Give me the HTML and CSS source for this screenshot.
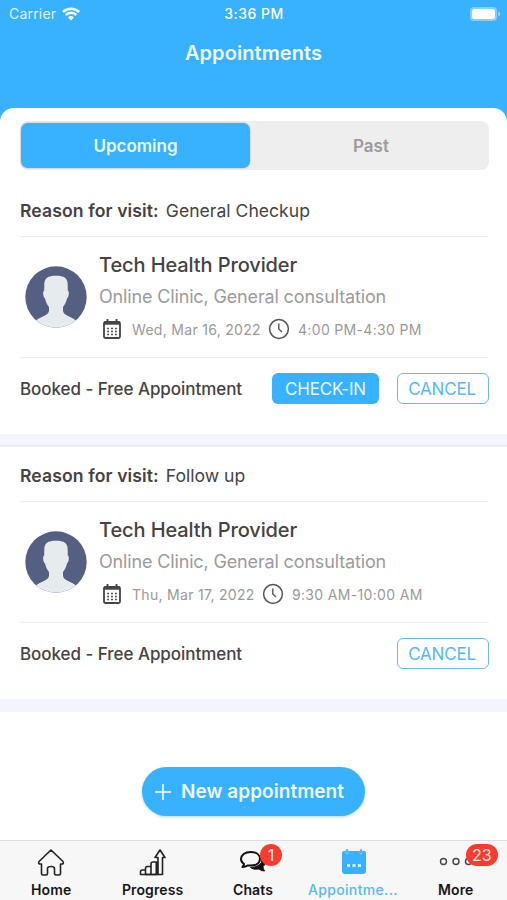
FILE: index.html
```html
<!DOCTYPE html>
<html lang="en">
<head>
<meta charset="utf-8">
<title>Appointments</title>
<link rel="stylesheet" href="styles.css">
</head>
<body>
<svg width="0" height="0" class="defs" aria-hidden="true">
  <symbol id="avatar" viewBox="0 0 62 62">
    <clipPath id="disc"><circle cx="31" cy="31" r="30.700"/></clipPath>
    <g clip-path="url(#disc)">
      <rect width="62" height="62" fill="#555f81"/>
      <path fill="#e6ecee" d="M19.300 19C19 12 23 9.700 31 9.700S43 12 42.700 19L42.800 24.500C44.500 25 44 31 42 32.500C41.200 36 39.800 39 38 41V45C39 50 46 50 51.500 55L54 62H8L10.500 55C16 50 23 50 24 45V41C22.200 39 20.800 36 20 32.500C18 31 17.500 25 19.200 24.500Z"/>
    </g>
  </symbol>
  <symbol id="calendar" viewBox="0 0 18 20">
    <rect x="1" y="3" width="16" height="16" rx="1.500" fill="none" stroke="#444" stroke-width="1.800"/>
    <path d="M1 2.500H17V5.700H1Z" fill="#444"/>
    <path d="M4.500 0V4M13.500 0V4" stroke="#444" stroke-width="1.900"/>
    <path d="M4.200 9.500H14M4.200 12.500H14M4.200 15.500H14" stroke="#444" stroke-width="1.500" stroke-dasharray="1.800 2.100"/>
  </symbol>
  <symbol id="clock" viewBox="0 0 22 22">
    <circle cx="11" cy="11" r="9.400" fill="none" stroke="#555" stroke-width="1.500"/>
    <path d="M10.800 5.500V11L14 14" fill="none" stroke="#555" stroke-width="1.400"/>
  </symbol>
</svg>
<div class="screen">
  <header class="header">
    <div class="status">
      <div class="carrier"><span>Carrier</span>
        <svg width="18" height="14" viewBox="0 0 18 14" fill="none" stroke="#fff" stroke-width="2.500"><path d="M.9 5A11.600 11.600 0 0 1 17.100 5M3.700 8A7.600 7.600 0 0 1 14.300 8"/><path d="M9 13.500L6 10.500A4.300 4.300 0 0 1 12 10.500Z" fill="#fff" stroke="none"/></svg>
      </div>
      <span class="time">3:36 PM</span>
      <svg class="battery" width="31" height="14" viewBox="0 0 31 14"><rect width="27" height="14" rx="4" fill="#85cffc"/><rect x="2" y="2" width="23" height="10" rx="2.500" fill="#fff"/><path d="M28 4.500Q30.500 5 30.500 7T28 9.500Z" fill="#85cffc"/></svg>
    </div>
    <h1>Appointments</h1>
  </header>
  <main class="sheet">
    <div class="segments"><button class="segment active">Upcoming</button><button class="segment">Past</button></div>
    <section class="card">
      <div class="reason"><b>Reason for visit:</b><span>General Checkup</span></div>
      <div class="provider">
        <svg class="avatar"><use href="#avatar"/></svg>
        <div class="details">
          <h2>Tech Health Provider</h2>
          <p class="clinic">Online Clinic, General consultation</p>
          <div class="when"><svg class="cal"><use href="#calendar"/></svg><span class="date">Wed, Mar 16, 2022</span><svg class="clock"><use href="#clock"/></svg><span class="hours">4:00 PM-4:30 PM</span></div>
        </div>
      </div>
      <div class="footer"><span class="state">Booked - Free Appointment</span><button class="btn filled">CHECK-IN</button><button class="btn cancel">CANCEL</button></div>
    </section>
    <div class="divider"></div>
    <section class="card">
      <div class="reason"><b>Reason for visit:</b><span>Follow up</span></div>
      <div class="provider">
        <svg class="avatar"><use href="#avatar"/></svg>
        <div class="details">
          <h2>Tech Health Provider</h2>
          <p class="clinic">Online Clinic, General consultation</p>
          <div class="when"><svg class="cal"><use href="#calendar"/></svg><span class="date thu">Thu, Mar 17, 2022</span><svg class="clock"><use href="#clock"/></svg><span class="hours">9:30 AM-10:00 AM</span></div>
        </div>
      </div>
      <div class="footer"><span class="state">Booked - Free Appointment</span><button class="btn cancel">CANCEL</button></div>
    </section>
    <div class="divider last"></div>
    <button class="new"><svg width="16" height="16" viewBox="0 0 16 16" stroke="#fff" stroke-width="1.500"><path d="M8 0V16M0 8H16"/></svg><span>New appointment</span></button>
  </main>
  <nav class="tabs">
    <div class="tab"><svg width="28" height="28" viewBox="0 0 28 28"><path d="M14 2L26 13.500Q27.500 16.500 23.500 16V25.500Q23.500 27 22 27H19Q17.500 27 17.500 25.500V20.500Q17.500 18.500 14 18.500T10.500 20.500V25.500Q10.500 27 9 27H6Q4.500 27 4.500 25.500V16Q.5 16.500 2 13.500Z"/></svg><span>Home</span></div>
    <div class="tab"><svg width="28" height="28" viewBox="0 0 28 28"><path d="M1.500 26.500V24Q1.500 22 3.500 22H6.500V26.500ZM6.500 26.500V20.500Q6.500 18.500 8.500 18.500H12V26.500ZM12 26.500V16Q12 14 14 14H17.500V26.500ZM19 26.500V9.500H16L21 2L26 9.500H23.500V26.500Z"/><path d="M6.500 26.500H19M17.500 14V26.500"/></svg><span>Progress</span></div>
    <div class="tab chat-tab"><div class="icon"><svg class="chats" width="28" height="28" viewBox="0 0 28 28"><path d="M11.500 4C6 4 2 7 2 11Q2 14 5 16Q5 17.500 3.500 19Q6.500 19 8.500 17.500Q20.500 18.500 21 11C21 7 17.500 4 11.500 4Z"/><path d="M23 9Q26.500 11 26 15Q26 17 24 18.500Q24 21 25.500 23Q22 23 20 21Q14 22 11.500 19.500Q19 19.500 22.500 14.500Z" fill="#111" stroke-width="1"/></svg><i class="badge">1</i></div><span>Chats</span></div>
    <div class="tab selected"><svg width="28" height="28" viewBox="0 0 28 28"><path d="M4 3H24Q26 3 26 5V23Q26 26 23 26H5Q2 26 2 23V5Q2 3 4 3Z" fill="#38b1fe" stroke="none"/><path d="M7 2.500V5M21 2.500V5" stroke="#82cffd" stroke-width="2.800" stroke-linecap="round"/><path d="M7 2.200V4.500M21 2.200V4.500" stroke="#38b1fe" stroke-width="1.500" stroke-linecap="round"/><path d="M7 17.500H10M12.500 17.500H15.500M18 17.500H21" stroke="#fff" stroke-width="2.400"/></svg><span>Appointme...</span></div>
    <div class="tab more-tab"><div class="icon"><svg class="more" width="34" height="28" viewBox="0 0 34 28"><circle cx="4.500" cy="13.500" r="3"/><circle cx="17" cy="13.500" r="3"/><circle cx="29.500" cy="13.500" r="3"/></svg><i class="badge wide">23</i></div><span>More</span></div>
  </nav>
</div>
</body>
</html>
```
FILE: styles.css
```css
* { box-sizing: border-box; }
body { margin: 0; font-family: Inter, "Liberation Sans", sans-serif; color: #454243; }
h1, h2, p { margin: 0; font-weight: 500; }
button { font-family: inherit; border: 0; padding: 0; margin: 0; white-space: nowrap; }
.defs { position: absolute; }
.screen { width: 507px; height: 900px; display: flex; flex-direction: column; background: #38b1fe; overflow: hidden; }
.header { height: 108px; color: #fff; flex: none; }
.status { height: 27px; padding: 0 6px 0 9px; display: grid; grid-template-columns: 1fr auto 1fr; align-items: center; font-size: 14px; }
.carrier { display: flex; align-items: center; gap: 6px; color: #def4ff; letter-spacing: .2px; }
.time { font-weight: 500; letter-spacing: .5px; margin-right: 2px; }
.battery { justify-self: end; }
h1 { text-align: center; font-size: 20px; line-height: 26px; margin-top: 13px; letter-spacing: .08px; font-weight: 600; color: #effaff; }
.sheet { flex: 1; min-height: 0; background: #fff; border-radius: 14px 14px 0 0; padding-top: 13px; display: flex; flex-direction: column; }
.segments { height: 49px; margin: 0 18px 1px 20px; display: flex; background: #eee; border-radius: 8px; padding: 2px 1px; flex: none; }
.segment { flex: 1; border-radius: 7px; font-size: 17px; font-weight: 600; color: #9b9b9b; background: transparent; padding-left: 4px; }
.segment.active { flex: 0 0 229px; background: #38b1fe; color: #e9f8ff; box-shadow: 0 0 2px #aaa; padding-left: 0; }
.card { padding: 0 18px 0 20px; flex: none; }
.reason { height: 66px; padding-top: 14px; border-bottom: 1px solid #eee; display: flex; align-items: center; gap: 7px; font-size: 17.6px; }
.reason b { font-weight: 600; letter-spacing: .1px; }
.provider { height: 121px; border-bottom: 1px solid #eee; display: flex; padding: 14px 0 0 5px; }
.avatar { width: 62px; height: 62px; margin: 15px 12px 0 0; }
h2 { font-size: 20px; line-height: 28px; letter-spacing: -.1px; }
.clinic { font-size: 18px; line-height: 24px; margin-top: 6px; color: #9b9b9b; font-weight: 400; letter-spacing: -.15px; white-space: nowrap; }
.when { display: flex; align-items: center; height: 24px; margin-top: 8px; font-size: 14px; color: #999; white-space: nowrap; }
.cal { width: 18px; height: 20px; margin: 0 11px 0 4px; }
.clock { width: 22px; height: 22px; margin-right: 8px; }
.date { width: 136px; letter-spacing: .3px; }
.date.thu { width: 130px; }
.hours { letter-spacing: .33px; }
.footer { height: 76px; padding-bottom: 15px; display: flex; align-items: center; }
.state { flex: 1; font-size: 17px; font-weight: 500; letter-spacing: -.05px; white-space: nowrap; }
.btn { width: 107px; height: 31px; border-radius: 6px; font-size: 17px; letter-spacing: -.2px; }
.filled { background: #38b1fe; color: #e6f7ff; margin-right: 18px; }
.cancel { width: 92px; background: #fff; color: #58b8f5; border: 1.5px solid #65bbf1; padding-right: 2px; }
.divider { height: 13px; background: #f3f4fd; border-bottom: 2px solid #ebebf2; flex: none; }
.divider + .card .reason { height: 55px; padding-top: 3px; }
.divider.last { border-bottom-color: #f3f4fd; }
.new { align-self: center; width: 223px; height: 49px; margin-top: 55px; border-radius: 25px; background: #38b1fe; color: #eefaff; display: flex; align-items: center; gap: 10px; padding-left: 13px; font-size: 19px; font-weight: 600; letter-spacing: .05px; box-shadow: 0 1px 3px #b9d9ec; }
.tabs { height: 60px; background: #f7f7f7; border-top: 1px solid #dedede; display: grid; grid-template-columns: repeat(5, 1fr); flex: none; }
.tab { display: flex; flex-direction: column; align-items: center; min-width: 0; padding-top: 7px; font-size: 14px; font-weight: 600; color: #161616; line-height: 18px; gap: 5px; padding-left: 1px; letter-spacing: .1px; }
.tab svg { display: block; fill: none; stroke: #222; stroke-width: 1.6; stroke-linejoin: round; }
.tab .chats { stroke: #111; stroke-width: 2; }
.tab .more { stroke-width: 1.4; stroke: #444; }
.chat-tab, .more-tab { padding-left: 0; padding-right: 1px; }
.selected { color: #58b8f5; font-weight: 500; letter-spacing: .35px; padding-left: 0; padding-right: 4px; }
.selected svg { margin-left: 3px; }
.icon { position: relative; }
.badge { position: absolute; left: 21px; top: -4px; width: 22px; height: 22px; border-radius: 11px; background: #fc3b30; color: #ffe9e6; font-style: normal; font-weight: 400; font-size: 16px; line-height: 22px; text-align: center; }
.badge.wide { left: 27px; width: 32px; }
```
